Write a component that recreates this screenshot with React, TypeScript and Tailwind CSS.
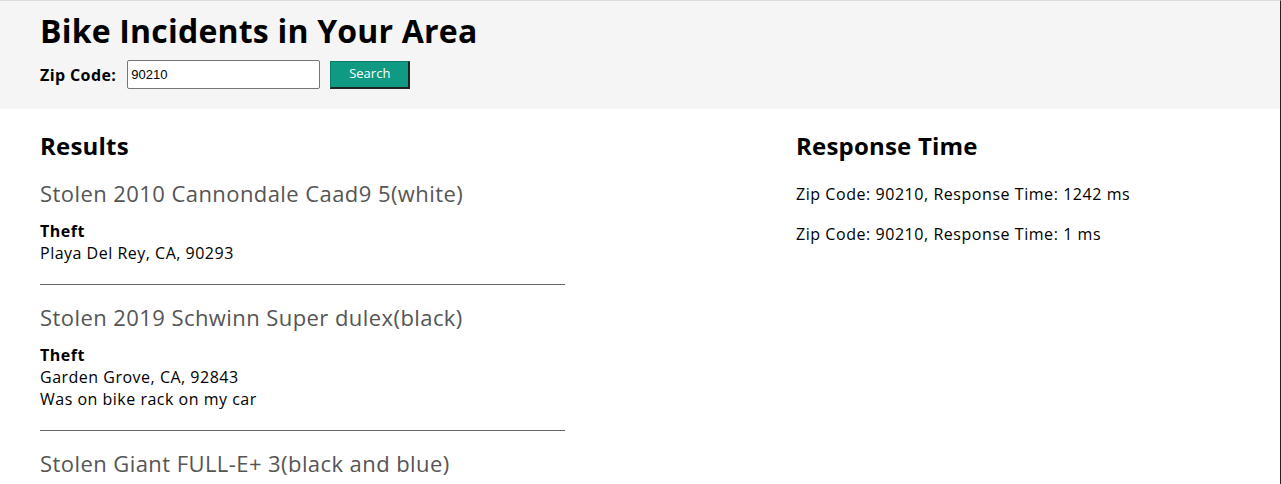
const incidents = [
  {
    title: 'Stolen 2010 Cannondale Caad9 5(white)',
    type: 'Theft',
    address: 'Playa Del Rey, CA, 90293',
    note: '',
  },
  {
    title: 'Stolen 2019 Schwinn Super dulex(black)',
    type: 'Theft',
    address: 'Garden Grove, CA, 92843',
    note: 'Was on bike rack on my car',
  },
  {
    title: 'Stolen Giant FULL-E+ 3(black and blue)',
    type: 'Theft',
    address: 'Los Angeles, CA, 90034',
    note: '',
  },
];

const responses = [
  { zip: '90210', ms: 1242 },
  { zip: '90210', ms: 1 },
];

export default function App() {
  return (
    <div className="min-h-screen bg-white text-black font-['Open_Sans','Liberation_Sans',sans-serif] border-t border-[#dcdce0] border-r border-r-[#222]">
      {/* Search header */}
      <header className="bg-[#f5f5f5] px-10 pt-[10px] pb-[20px]">
        <h1 className="text-[32px] font-bold leading-[40px] tracking-[0.2px]">Bike Incidents in Your Area</h1>
        <form className="mt-[9px] flex items-center" onSubmit={(e) => e.preventDefault()}>
          <label htmlFor="zip" className="text-[16px] font-bold tracking-[0.4px] mr-[11px]">Zip Code:</label>
          <input
            id="zip"
            defaultValue="90210"
            className="w-[193px] h-[29px] bg-white border border-[#767676] rounded-[2px] px-[3px] text-[13px] font-['Liberation_Sans',sans-serif]"
          />
          <button
            type="submit"
            className="ml-[10px] w-[80px] h-[28px] bg-[#0e9a83] text-white text-[13px] border border-[#0b7a67] border-r-2 border-b-2 border-r-[#222] border-b-[#222]"
          >
            Search
          </button>
        </form>
      </header>

      <main className="flex px-10">
        {/* Results list */}
        <section className="w-[756px] pt-[22px]">
          <h2 className="text-[24px] font-bold leading-[30px] tracking-[0.2px]">Results</h2>
          <ul className="w-[525px] mt-[5px]">
            {incidents.map((item, i) => (
              <li key={i} className={i < incidents.length - 1 ? 'border-b border-[#666] pb-[20px]' : ''}>
                <h3 className="mt-[18px] text-[22px] leading-[28px] tracking-[0.43px] text-[#555]">{item.title}</h3>
                <div className="mt-[13px] text-[16px] leading-[22px] tracking-[0.5px]">
                  <p className="font-bold">{item.type}</p>
                  <p>{item.address}</p>
                  {item.note && <p>{item.note}</p>}
                </div>
              </li>
            ))}
          </ul>
        </section>

        {/* Response times */}
        <section className="flex-1 pt-[22px]">
          <h2 className="text-[24px] font-bold leading-[30px] tracking-[0.2px]">Response Time</h2>
          <div className="mt-[22px] text-[16px] leading-[22px] tracking-[0.55px] flex flex-col gap-[18px]">
            {responses.map((r, i) => (
              <p key={i}>Zip Code: {r.zip}, Response Time: {r.ms} ms</p>
            ))}
          </div>
        </section>
      </main>
    </div>
  );
}
